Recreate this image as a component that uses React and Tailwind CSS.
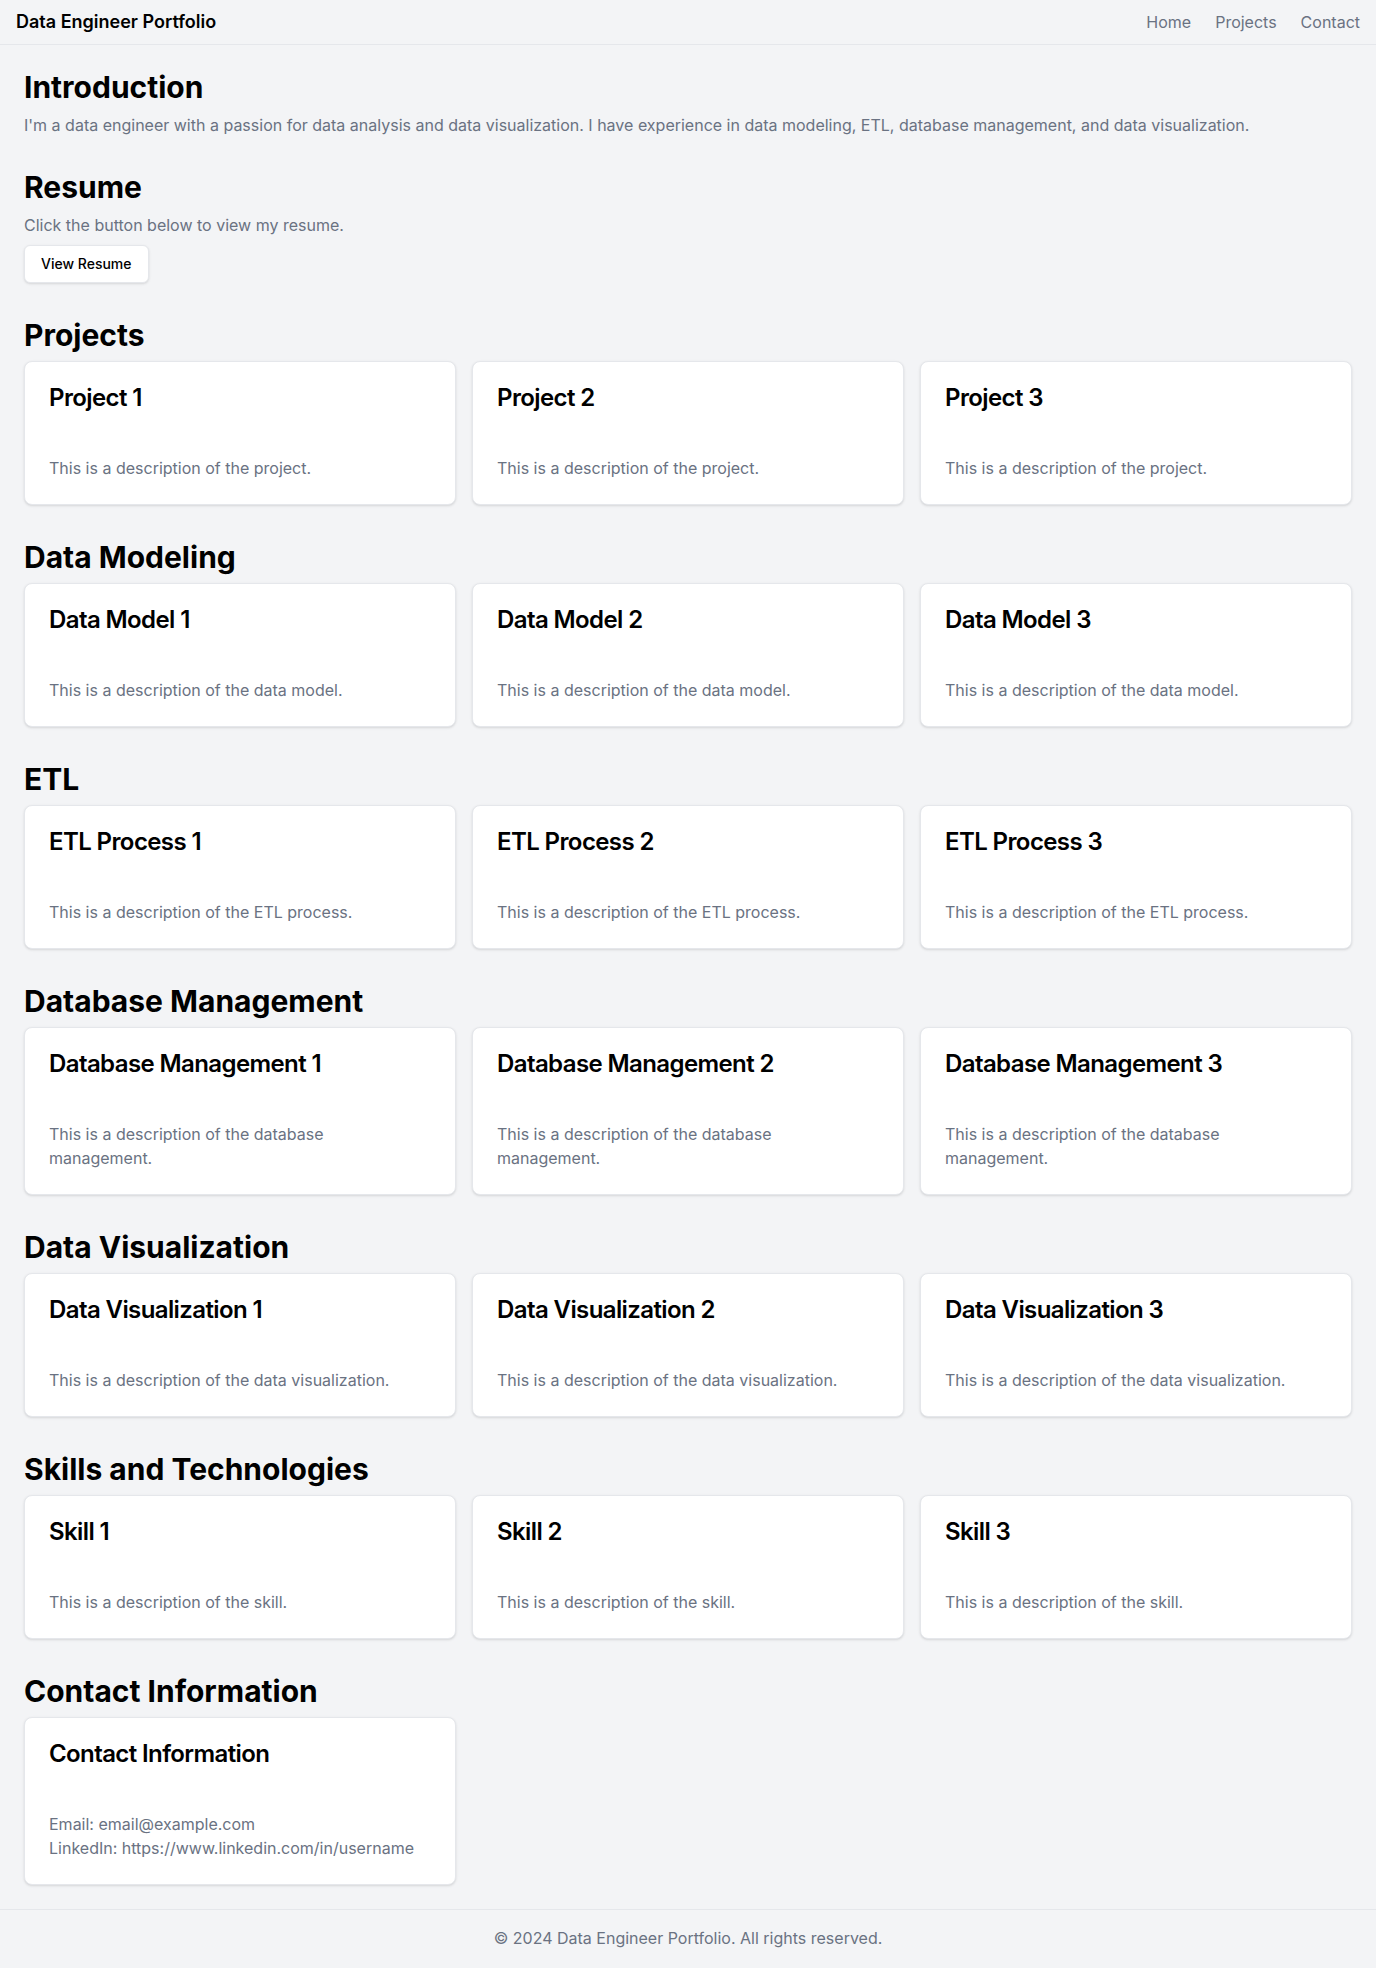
import React from 'react';

const sections = [
  {
    title: 'Projects',
    items: [
      { name: 'Project 1', text: 'This is a description of the project.' },
      { name: 'Project 2', text: 'This is a description of the project.' },
      { name: 'Project 3', text: 'This is a description of the project.' },
    ],
  },
  {
    title: 'Data Modeling',
    items: [
      { name: 'Data Model 1', text: 'This is a description of the data model.' },
      { name: 'Data Model 2', text: 'This is a description of the data model.' },
      { name: 'Data Model 3', text: 'This is a description of the data model.' },
    ],
  },
  {
    title: 'ETL',
    items: [
      { name: 'ETL Process 1', text: 'This is a description of the ETL process.' },
      { name: 'ETL Process 2', text: 'This is a description of the ETL process.' },
      { name: 'ETL Process 3', text: 'This is a description of the ETL process.' },
    ],
  },
  {
    title: 'Database Management',
    items: [
      { name: 'Database Management 1', text: 'This is a description of the database management.' },
      { name: 'Database Management 2', text: 'This is a description of the database management.' },
      { name: 'Database Management 3', text: 'This is a description of the database management.' },
    ],
  },
  {
    title: 'Data Visualization',
    items: [
      { name: 'Data Visualization 1', text: 'This is a description of the data visualization.' },
      { name: 'Data Visualization 2', text: 'This is a description of the data visualization.' },
      { name: 'Data Visualization 3', text: 'This is a description of the data visualization.' },
    ],
  },
  {
    title: 'Skills and Technologies',
    items: [
      { name: 'Skill 1', text: 'This is a description of the skill.' },
      { name: 'Skill 2', text: 'This is a description of the skill.' },
      { name: 'Skill 3', text: 'This is a description of the skill.' },
    ],
  },
];

function Card({ title, children }) {
  return (
    <div className="rounded-lg border border-gray-200 bg-white p-6 shadow-sm">
      <h3 className="text-2xl font-semibold leading-none tracking-tight text-black">{title}</h3>
      <div className="mt-[46px] text-base text-gray-500">{children}</div>
    </div>
  );
}

export default function App() {
  return (
    <div className="min-h-screen bg-gray-100 font-['Inter',sans-serif] text-black">
      {/* Header */}
      <header className="flex items-center justify-between border-b border-gray-200 px-4 py-2">
        <span className="text-lg font-semibold">Data Engineer Portfolio</span>
        <nav className="flex space-x-6 text-base text-gray-500">
          <a href="#">Home</a>
          <a href="#">Projects</a>
          <a href="#">Contact</a>
        </nav>
      </header>

      <main className="space-y-8 px-6 py-6">
        <section>
          <h2 className="mb-2 text-3xl font-bold">Introduction</h2>
          <p className="text-gray-500">
            I'm a data engineer with a passion for data analysis and data visualization. I have experience in data modeling, ETL, database management, and data visualization.
          </p>
        </section>

        <section>
          <h2 className="mb-2 text-3xl font-bold">Resume</h2>
          <p className="text-gray-500">Click the button below to view my resume.</p>
          <button className="mt-2 h-[38px] rounded-md border border-gray-200 bg-white px-4 text-sm font-medium shadow-sm">
            View Resume
          </button>
        </section>

        {sections.map((s) => (
          <section key={s.title} className="pt-0.5">
            <h2 className="mb-2 text-3xl font-bold">{s.title}</h2>
            <div className="grid grid-cols-3 gap-4">
              {s.items.map((it) => (
                <Card key={it.name} title={it.name}>
                  <p>{it.text}</p>
                </Card>
              ))}
            </div>
          </section>
        ))}

        <section className="pt-0.5">
          <h2 className="mb-2 text-3xl font-bold">Contact Information</h2>
          <div className="grid grid-cols-3 gap-4">
            <Card title="Contact Information">
              <p>Email: email@example.com</p>
              <p>LinkedIn: https://www.linkedin.com/in/username</p>
            </Card>
          </div>
        </section>
      </main>

      <footer className="border-t border-gray-200 py-4 text-center text-base text-gray-500">
        © 2024 Data Engineer Portfolio. All rights reserved.
      </footer>
    </div>
  );
}
